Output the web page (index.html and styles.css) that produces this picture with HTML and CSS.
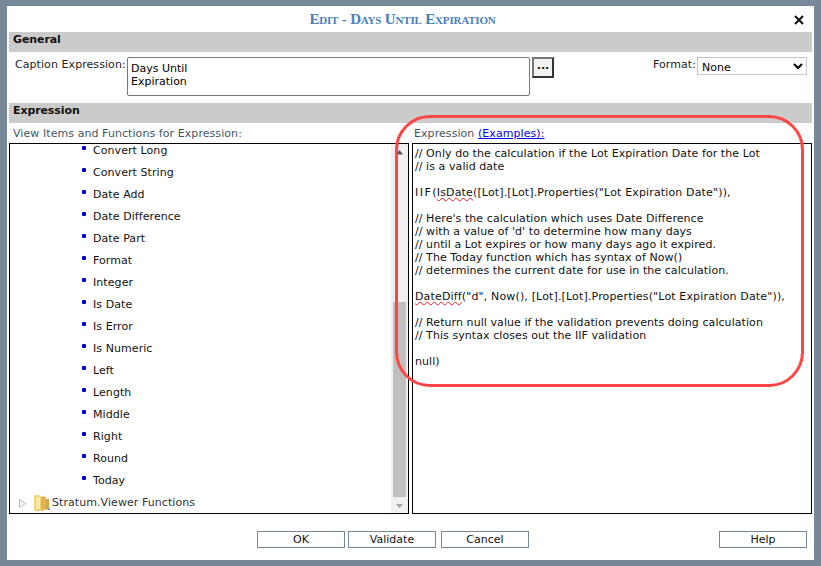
FILE: index.html
```html
<!DOCTYPE html>
<html lang="en">
<head>
<meta charset="utf-8">
<title>Edit - Days Until Expiration</title>
<link rel="stylesheet" href="styles.css">
</head>
<body>
<div class="dialog">
  <header class="titlebar">
    <h1 class="title">Edit - Days Until Expiration</h1>
    <svg class="close" width="10" height="10" viewBox="0 0 10 10"><path d="M1 1L9 9M9 1L1 9" stroke="#111" stroke-width="2" fill="none"/></svg>
  </header>

  <h2 class="section">General</h2>
  <div class="general">
    <label class="caption-label">Caption Expression:</label>
    <textarea class="caption-input" rows="2">Days Until
Expiration</textarea>
    <button class="dots">...</button>
    <div class="format">
      <label class="format-label">Format:</label>
      <select class="format-select"><option>None</option></select>
    </div>
  </div>

  <h2 class="section">Expression</h2>
  <div class="panes">
    <div class="pane">
      <div class="pane-label">View Items and Functions for Expression:</div>
      <div class="tree-box">
        <div class="tree">
          <ul class="functions">
            <li>Convert Long</li>
            <li>Convert String</li>
            <li>Date Add</li>
            <li>Date Difference</li>
            <li>Date Part</li>
            <li>Format</li>
            <li>Integer</li>
            <li>Is Date</li>
            <li>Is Error</li>
            <li>Is Numeric</li>
            <li>Left</li>
            <li>Length</li>
            <li>Middle</li>
            <li>Right</li>
            <li>Round</li>
            <li>Today</li>
          </ul>
          <div class="folder-row">
            <svg class="expander" width="9" height="11" viewBox="0 0 9 11"><path d="M1.5 1.5L7.5 5.5L1.5 9.5Z" fill="#fff" stroke="#b8b8b8"/></svg>
            <svg class="folder" width="16" height="18" viewBox="0 0 16 18">
              <path d="M0 2.5Q0 1 1.500 1H5L6.500 2.500H7V16.500Q4 18 1.500 17Q0 16.500 0 15Z" fill="#f3d27a"/>
              <path d="M7 2.500H11Q12 2.500 12 4V15.500L7 17Z" fill="#e2b44c"/>
              <path d="M2 3H6V15H2Z" fill="#fbe9ae"/>
              <path d="M12 5H15V15L12 16Z" fill="#cfa650"/>
              <rect x="14" y="14" width="2" height="2" fill="#6fa6c8"/>
            </svg>
            <span>Stratum.Viewer Functions</span>
          </div>
        </div>
        <div class="scrollbar">
          <svg class="arrow" width="17" height="16" viewBox="0 0 17 16"><path d="M5 10.500L8.500 6L12 10.500Z" fill="#505050"/></svg>
          <div class="track"><div class="thumb"></div></div>
          <svg class="arrow" width="17" height="17" viewBox="0 0 17 17"><path d="M5 7H12L8.500 11Z" fill="#a3a3a3"/></svg>
        </div>
      </div>
    </div>
    <div class="pane pane-code">
      <div class="pane-label">Expression <a class="examples" href="#">(Examples):</a></div>
      <div class="code-box"><pre class="code">// Only do the calculation if the Lot Expiration Date for the Lot
// is a valid date

<span class="wide"><span class="serif-i">IIF</span>(<span class="squiggle">IsDate</span>([Lot].[Lot].Properties("Lot Expiration Date")),</span>

// Here's the calculation which uses Date Difference
// with a value of 'd' to determine how many days
// until a Lot expires or how many days ago it expired.
// The Today function which has syntax of Now()
// determines the current date for use in the calculation.

<span class="wide"><span class="squiggle">DateDiff</span>("d", Now(), [Lot].[Lot].Properties("Lot Expiration Date")),</span>

// Return null value if the validation prevents doing calculation
// This syntax closes out the IIF validation

null)</pre></div>
    </div>
  </div>

  <footer class="actions">
    <button class="action">OK</button>
    <button class="action">Validate</button>
    <button class="action cancel">Cancel</button>
    <button class="action help">Help</button>
  </footer>

  <div class="highlight"></div>
</div>
</body>
</html>
```
FILE: styles.css
```css
* { box-sizing: border-box; }
html, body { margin: 0; height: 100%; }
body {
  background: #778899;
  padding: 6px 7px;
  font-family: "DejaVu Sans", sans-serif;
  font-size: 11px;
  letter-spacing: 0.07px;
  color: #000;
  overflow: hidden;
}
.dialog {
  position: relative;
  width: 807px;
  height: 554px;
  background: #fff;
  padding: 0 2px;
}
.titlebar {
  position: relative;
  height: 26px;
  padding-right: 16px;
  display: flex;
  align-items: center;
  justify-content: center;
}
.title {
  margin: 0;
  font-family: "Liberation Serif", serif;
  font-size: 15px;
  letter-spacing: -0.18px;
  font-weight: bold;
  font-variant: small-caps;
  color: #4a7ebb;
}
.close { position: absolute; right: 8px; top: 9px; }
.section {
  margin: 0;
  height: 20px;
  background: #cbcbcb;
  padding: 0 4px;
  font-size: 11px;
  letter-spacing: -0.1px;
  line-height: 15px;
  font-weight: bold;
  color: #111;
}
.general {
  display: flex;
  align-items: flex-start;
  height: 51px;
  padding-top: 5px;
}
.caption-label { margin: 1px 0 0 6px; width: 112px; line-height: 14px; color: #222; }
.caption-input {
  width: 403px;
  height: 39px;
  margin: 0;
  padding: 4px 3px;
  border: 1px solid #767676;
  border-radius: 2px;
  font: 11px/13px "DejaVu Sans", sans-serif;
  resize: none;
  overflow: hidden;
}
.dots {
  width: 22px;
  height: 21px;
  margin-left: 2px;
  padding: 0 0 4px;
  background: #f2f2f2;
  border: 2px solid;
  border-color: #777 #333 #333 #777;
  font: bold 11px "DejaVu Sans", sans-serif;
  color: #111;
}
.format { margin-left: auto; margin-right: 5px; display: flex; align-items: flex-start; }
.format-label { margin: 1px 1px 0 0; line-height: 14px; color: #222; }
.format-select {
  width: 110px;
  height: 18px;
  margin: 0;
  padding: 2px 0 0 0;
  border: 1px solid #c8c8c8;
  background: #fff;
  font: 11px "DejaVu Sans", sans-serif;
}
.panes { display: flex; gap: 3px; }
.pane { width: 400px; }
.pane-label {
  height: 20px;
  padding: 4px 4px 0;
  line-height: 14px;
  color: #45555f;
}
.pane-code .pane-label { padding-left: 2px; }
.examples { color: #0000ee; }
.tree-box, .code-box {
  height: 371px;
  border: 1px solid #000;
  background: #fff;
}
.tree-box { display: flex; }
.tree { flex: 1; min-width: 0; overflow: hidden; }
.functions { list-style: none; margin: 0; padding: 0 0 0 71px; }
.functions li {
  position: relative;
  height: 22px;
  padding-left: 12px;
  line-height: 14px;
  color: #111;
}
.functions li::before {
  content: "";
  position: absolute;
  left: 1px;
  top: 2px;
  width: 4px;
  height: 4px;
  border-radius: 1px;
  background: #0000dd;
}
.folder-row { display: flex; align-items: flex-start; height: 20px; margin-top: -2px; padding-left: 8px; line-height: 18px; color: #333; }
.expander { margin-top: 4px; margin-right: 7px; }
.folder { margin-right: 2px; }
.scrollbar {
  width: 17px;
  background: #f0f0f0;
  display: flex;
  flex-direction: column;
}
.arrow { flex: none; display: block; }
.track { flex: 1; padding: 142px 2px 0 2px; }
.thumb { height: 195px; background: #c0c0c0; }
.code-box { padding: 3px 0 0 2px; overflow: hidden; }
.code {
  margin: 0;
  font: 11px/13px "DejaVu Sans", sans-serif;
  color: #111;
}
.wide { letter-spacing: 0.15px; }
.serif-i { letter-spacing: 1.5px; }
.squiggle { text-decoration: underline wavy #e02020 1px; }
.actions { position: relative; display: flex; height: 17px; margin-top: 17px; padding-left: 248px; }
.action {
  width: 88px;
  height: 17px;
  margin: 0 3px 0 0;
  padding: 0;
  background: #fff;
  border: 1px solid #778899;
  font: 11px/14px "DejaVu Sans", sans-serif;
  color: #111;
}
.cancel { margin-left: 2px; }
.help { margin-left: auto; margin-right: 5px; }
.highlight {
  position: absolute;
  left: 388px;
  top: 109px;
  width: 409px;
  height: 272px;
  border: 3px solid #ff4545;
  border-radius: 35px;
  pointer-events: none;
}
```
